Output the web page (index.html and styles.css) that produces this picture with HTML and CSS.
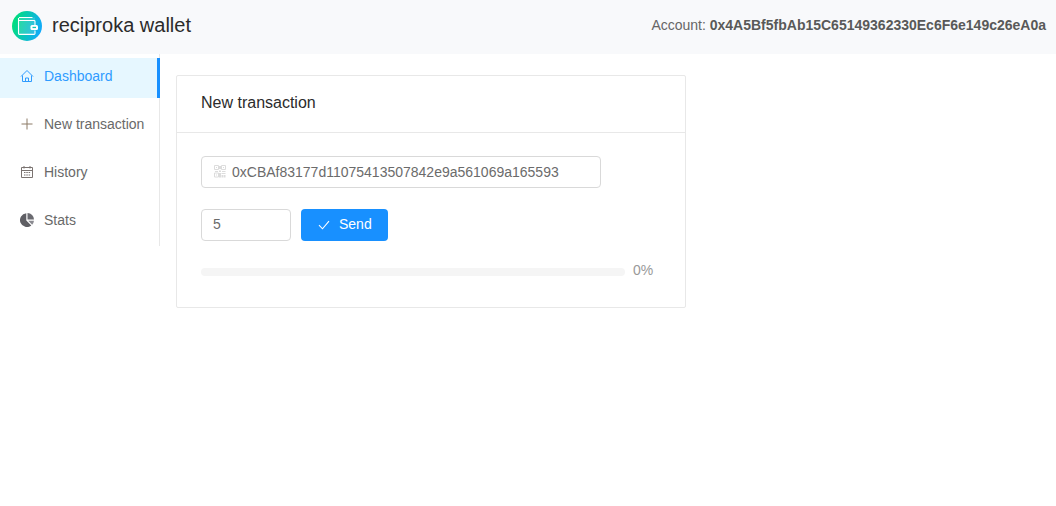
FILE: index.html
```html
<!DOCTYPE html>
<html lang="en">
<head>
<meta charset="utf-8">
<title>reciproka wallet</title>
<link rel="stylesheet" href="styles.css">
</head>
<body>
<header class="header">
  <div class="brand">
    <svg class="logo" viewBox="0 0 30 30" aria-hidden="true">
      <defs><linearGradient id="lg" x1="0" y1="0.35" x2="1" y2="0.65"><stop offset="0" stop-color="#00e078"/><stop offset="1" stop-color="#12a8ff"/></linearGradient></defs>
      <circle cx="15" cy="15" r="15" fill="url(#lg)"/>
      <rect x="6.500" y="6.500" width="16.500" height="17" fill="#fff" opacity=".14"/>
      <path d="M7 6.500h13.500M6.500 7v15.500c0 .5.4.9.9.9h14.700c.5 0 .9-.4.9-.9V19.500M6.500 9.500h15.600c.5 0 .9.4.9.9V14" fill="none" stroke="#fff" stroke-width="1.100"/>
      <rect x="18.500" y="14" width="7.500" height="5" rx="1.500" fill="#fff"/>
      <rect x="20.500" y="15.800" width="3.500" height="1.300" fill="#12c3b4"/>
    </svg>
    <span class="brand-name">reciproka wallet</span>
  </div>
  <div class="account">Account: <strong>0x4A5Bf5fbAb15C65149362330Ec6F6e149c26eA0a</strong></div>
</header>
<div class="layout">
  <nav class="menu">
    <a class="menu-item selected">
      <svg class="icon" viewBox="0 0 14 14" aria-hidden="true"><path d="M1 7.500 7 1.500l6 6M2.500 6.500v6h9v-6M5.500 12.500V9h3v3.500" fill="none" stroke="currentColor" stroke-width="1"/></svg>
      <span>Dashboard</span>
    </a>
    <a class="menu-item">
      <svg class="icon" viewBox="0 0 14 14" aria-hidden="true"><path d="M7 1.500v11M1.500 7h11" fill="none" stroke="#8c7a66" stroke-width="1"/></svg>
      <span>New transaction</span>
    </a>
    <a class="menu-item">
      <svg class="icon" viewBox="0 0 14 14" aria-hidden="true"><path d="M1.500 2.500h11v10h-11zM1.500 5.500h11M4 1v2.500M10 1v2.500" fill="none" stroke="#7a7370" stroke-width="1"/><path d="M4 7.500h1.500M6.300 7.500h1.500M8.600 7.500h1.500M4 10h1.500M6.300 10h1.500M8.600 10h1.500" stroke="#7a7370" stroke-width="1"/></svg>
      <span>History</span>
    </a>
    <a class="menu-item">
      <svg class="icon" viewBox="0 0 14 14" aria-hidden="true"><path d="M6.300 .3v7.200l5 5A6.900 6.900 0 1 1 6.300 .3z" fill="#5f5f64"/><path d="M7.500 0a6.500 6.500 0 0 1 6.500 6.500H7.500z" fill="#6a6a70"/><path d="M8.200 7.800H14a6.800 6.800 0 0 1-1.800 3.900z" fill="#8a8a90"/></svg>
      <span>Stats</span>
    </a>
  </nav>
  <main class="content">
    <section class="card">
      <h2 class="card-head">New transaction</h2>
      <div class="card-body">
        <label class="address">
          <svg class="qr" viewBox="0 0 12 13" aria-hidden="true"><path d="M.5.500h4v4h-4zM7.500.500h4v4h-4zM.5 8h4v4h-4z" fill="none" stroke="#dcdcdc" stroke-width="1"/><path d="M2 2h1v1H2zM9 2h1v1H9zM2 9.500h1v1H2zM5 1h2v3H5zM1 6h3v1H1zM5 5.500h2v1.500H5zM8 6h3.500v1H8zM5 8h2v4.500H5zM7.500 8h4v1h-4zM7.500 10h1.500v2.500H7.500zM9.500 10h2v2.500h-2z" fill="#dcdcdc"/></svg>
          <input class="field" type="text" value="0xCBAf83177d11075413507842e9a561069a165593">
        </label>
        <div class="send-row">
          <input class="amount" type="text" value="5">
          <button class="send" type="button">
            <svg class="check" viewBox="0 0 12 10" aria-hidden="true"><path d="M1 5.200 4.500 8.800 11 1.200" fill="none" stroke="#fff" stroke-width="1.100"/></svg>
            <span class="send-label">Send</span>
          </button>
        </div>
        <div class="progress">
          <div class="track"></div>
          <span class="percent">0%</span>
        </div>
      </div>
    </section>
  </main>
</div>
</body>
</html>
```
FILE: styles.css
```css
* { box-sizing: border-box; }
html, body { margin: 0; padding: 0; }
body {
  background: #fff;
  font-family: "Liberation Sans", Arial, sans-serif;
  font-size: 14px;
  color: #666;
  height: 506px;
  overflow: hidden;
}
.header {
  height: 54px;
  background: #f8f9fb;
  display: flex;
  align-items: center;
  justify-content: space-between;
  padding: 0 10px 2px 12px;
}
.brand { display: flex; align-items: center; gap: 10px; }
.logo { width: 30px; height: 30px; display: block; }
.brand-name { font-size: 20px; color: #2b2b2b; padding-bottom: 2px; }
.account { color: #666; padding-bottom: 2px; }
.account strong { font-weight: 700; color: #595959; }
.layout { display: flex; align-items: flex-start; }
.menu {
  width: 160px;
  height: 192px;
  border-right: 1px solid #e8e8e8;
  padding-top: 4px;
  display: flex;
  flex-direction: column;
  gap: 8px;
}
.menu-item {
  height: 40px;
  margin-right: -1px;
  padding: 0 0 4px 20px;
  display: flex;
  align-items: center;
  gap: 10px;
  color: #696969;
}
.menu-item.selected {
  background: #e6f7ff;
  color: #2f9bff;
  border-right: 3px solid #1890ff;
}
.icon { width: 14px; height: 14px; flex: none; display: block; }
.content { padding: 21px 0 0 16px; }
.card {
  width: 510px;
  height: 233px;
  border: 1px solid #e8e8e8;
  border-radius: 2px;
}
.card-head {
  margin: 0;
  height: 57px;
  padding: 0 24px 2px;
  display: flex;
  align-items: center;
  border-bottom: 1px solid #e8e8e8;
  font-size: 16px;
  font-weight: 400;
  color: #2b2b2b;
}
.card-body { padding: 23px 24px 0; }
.address { position: relative; display: block; width: 400px; height: 32px; }
.qr { position: absolute; left: 13px; top: 9px; width: 12px; height: 13px; }
.field, .amount {
  height: 32px;
  border: 1px solid #d9d9d9;
  border-radius: 4px;
  font: inherit;
  color: #6b6b6b;
  background: #fff;
  outline: none;
}
.field { width: 400px; padding: 0 11px 0 30px; display: block; }
.amount { width: 90px; padding: 0 11px 2px; }
.send-row { display: flex; gap: 10px; margin-top: 21px; }
.send {
  width: 87px;
  height: 32px;
  border: 0;
  border-radius: 4px;
  background: #1890ff;
  color: #fff;
  font: inherit;
  display: flex;
  align-items: center;
  gap: 9px;
  padding: 0 0 0 17px;
}
.send-label { padding-bottom: 2px; }
.check { width: 12px; height: 10px; display: block; margin-bottom: 1px; }
.progress { display: flex; align-items: center; gap: 8px; margin-top: 20px; height: 22px; }
.track { width: 424px; height: 8px; border-radius: 100px; background: #f5f5f5; }
.percent { color: #999; padding-bottom: 4px; }
```
